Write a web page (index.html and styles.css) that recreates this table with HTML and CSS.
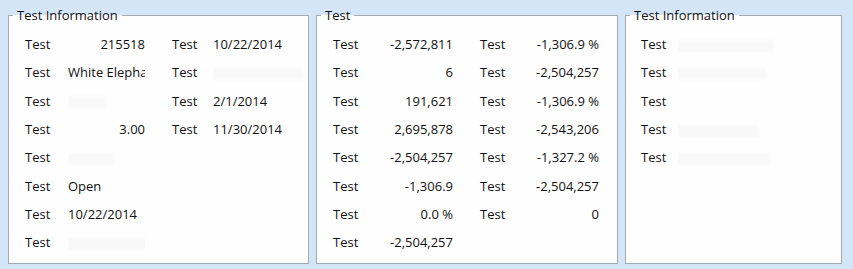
FILE: index.html
```html
<!DOCTYPE html>
<html>
<head>
<meta charset="utf-8">
<link rel="stylesheet" href="styles.css">
</head>
<body>
<div class="page">
  <fieldset class="group g1">
    <legend>Test Information</legend>
    <div class="grid cols4a">
      <span class="lbl">Test</span><span class="val r">215518</span><span class="lbl">Test</span><span class="val">10/22/2014</span>
      <span class="lbl">Test</span><span class="val clip">White Elephant</span><span class="lbl">Test</span><span class="val"><i class="blur w90"></i></span>
      <span class="lbl">Test</span><span class="val"><i class="blur w38"></i></span><span class="lbl">Test</span><span class="val">2/1/2014</span>
      <span class="lbl">Test</span><span class="val r">3.00</span><span class="lbl">Test</span><span class="val">11/30/2014</span>
      <span class="lbl">Test</span><span class="val"><i class="blur w45"></i></span><span></span><span></span>
      <span class="lbl">Test</span><span class="val">Open</span><span></span><span></span>
      <span class="lbl">Test</span><span class="val">10/22/2014</span><span></span><span></span>
      <span class="lbl">Test</span><span class="val"><i class="blur w85"></i></span><span></span><span></span>
    </div>
  </fieldset>
  <fieldset class="group g2">
    <legend>Test</legend>
    <div class="grid cols4b">
      <span class="lbl">Test</span><span class="val r">-2,572,811</span><span class="lbl">Test</span><span class="val r">-1,306.9 %</span>
      <span class="lbl">Test</span><span class="val r">6</span><span class="lbl">Test</span><span class="val r">-2,504,257</span>
      <span class="lbl">Test</span><span class="val r">191,621</span><span class="lbl">Test</span><span class="val r">-1,306.9 %</span>
      <span class="lbl">Test</span><span class="val r">2,695,878</span><span class="lbl">Test</span><span class="val r">-2,543,206</span>
      <span class="lbl">Test</span><span class="val r">-2,504,257</span><span class="lbl">Test</span><span class="val r">-1,327.2 %</span>
      <span class="lbl">Test</span><span class="val r">-1,306.9</span><span class="lbl">Test</span><span class="val r">-2,504,257</span>
      <span class="lbl">Test</span><span class="val r">0.0 %</span><span class="lbl">Test</span><span class="val r">0</span>
      <span class="lbl">Test</span><span class="val r">-2,504,257</span><span></span><span></span>
    </div>
  </fieldset>
  <fieldset class="group g3">
    <legend>Test Information</legend>
    <div class="grid cols2">
      <span class="lbl">Test</span><span class="val"><i class="blur w95"></i></span>
      <span class="lbl">Test</span><span class="val"><i class="blur w88"></i></span>
      <span class="lbl">Test</span><span class="val"></span>
      <span class="lbl">Test</span><span class="val"><i class="blur w80"></i></span>
      <span class="lbl">Test</span><span class="val"><i class="blur w92"></i></span>
    </div>
  </fieldset>
</div>
</body>
</html>
```
FILE: styles.css
```css
html, body {
  margin: 0;
  padding: 0;
}
body {
  background: #d3e5f6;
  font-family: "Open Sans", "Noto Sans", "DejaVu Sans", sans-serif;
  font-size: 13px;
  color: #111;
  width: 853px;
  height: 269px;
  overflow: hidden;
}
.page {
  display: flex;
  gap: 7px;
  padding: 7px 0 0 8px;
}
.group {
  margin: 0;
  padding: 0 0 6px 0;
  border: 1px solid #a2abb4;
  background: #fefefe;
  min-width: 0;
  box-sizing: border-box;
  height: 257px;
}
.group legend {
  margin-left: 4px;
  padding: 0 4px;
  line-height: 17px;
  font-size: 13px;
  color: #111;
  background: transparent;
}
.g1 { width: 301px; }
.g2 { width: 302px; }
.g3 { width: 217px; }
.grid {
  display: grid;
  grid-auto-rows: 28.3px;
  align-items: center;
  padding-top: 6px;
}
.cols4a {
  grid-template-columns: 43px 77px 27px 41px 1fr;
  padding-left: 16px;
}
.cols4a > span:nth-child(4n+3) { grid-column: 4; }
.cols4a > span:nth-child(4n+4) { grid-column: 5; }
.cols4b {
  grid-template-columns: 43px 77px 27px 41px 78px;
  padding-left: 16px;
}
.cols4b > span:nth-child(4n+3) { grid-column: 4; }
.cols4b > span:nth-child(4n+4) { grid-column: 5; }
.cols2 {
  grid-template-columns: 37px 1fr;
  padding-left: 15px;
}
.val {
  white-space: nowrap;
  overflow: hidden;
}
.r { text-align: right; }
.clip { text-overflow: clip; }
.blur {
  display: inline-block;
  height: 12px;
  vertical-align: middle;
  background: #f8f8f8;
  filter: blur(1.5px);
}
.w38 { width: 38px; }
.w45 { width: 45px; }
.w80 { width: 80px; }
.w85 { width: 85px; }
.w88 { width: 88px; }
.w90 { width: 90px; }
.w92 { width: 92px; }
.w95 { width: 95px; }
```
